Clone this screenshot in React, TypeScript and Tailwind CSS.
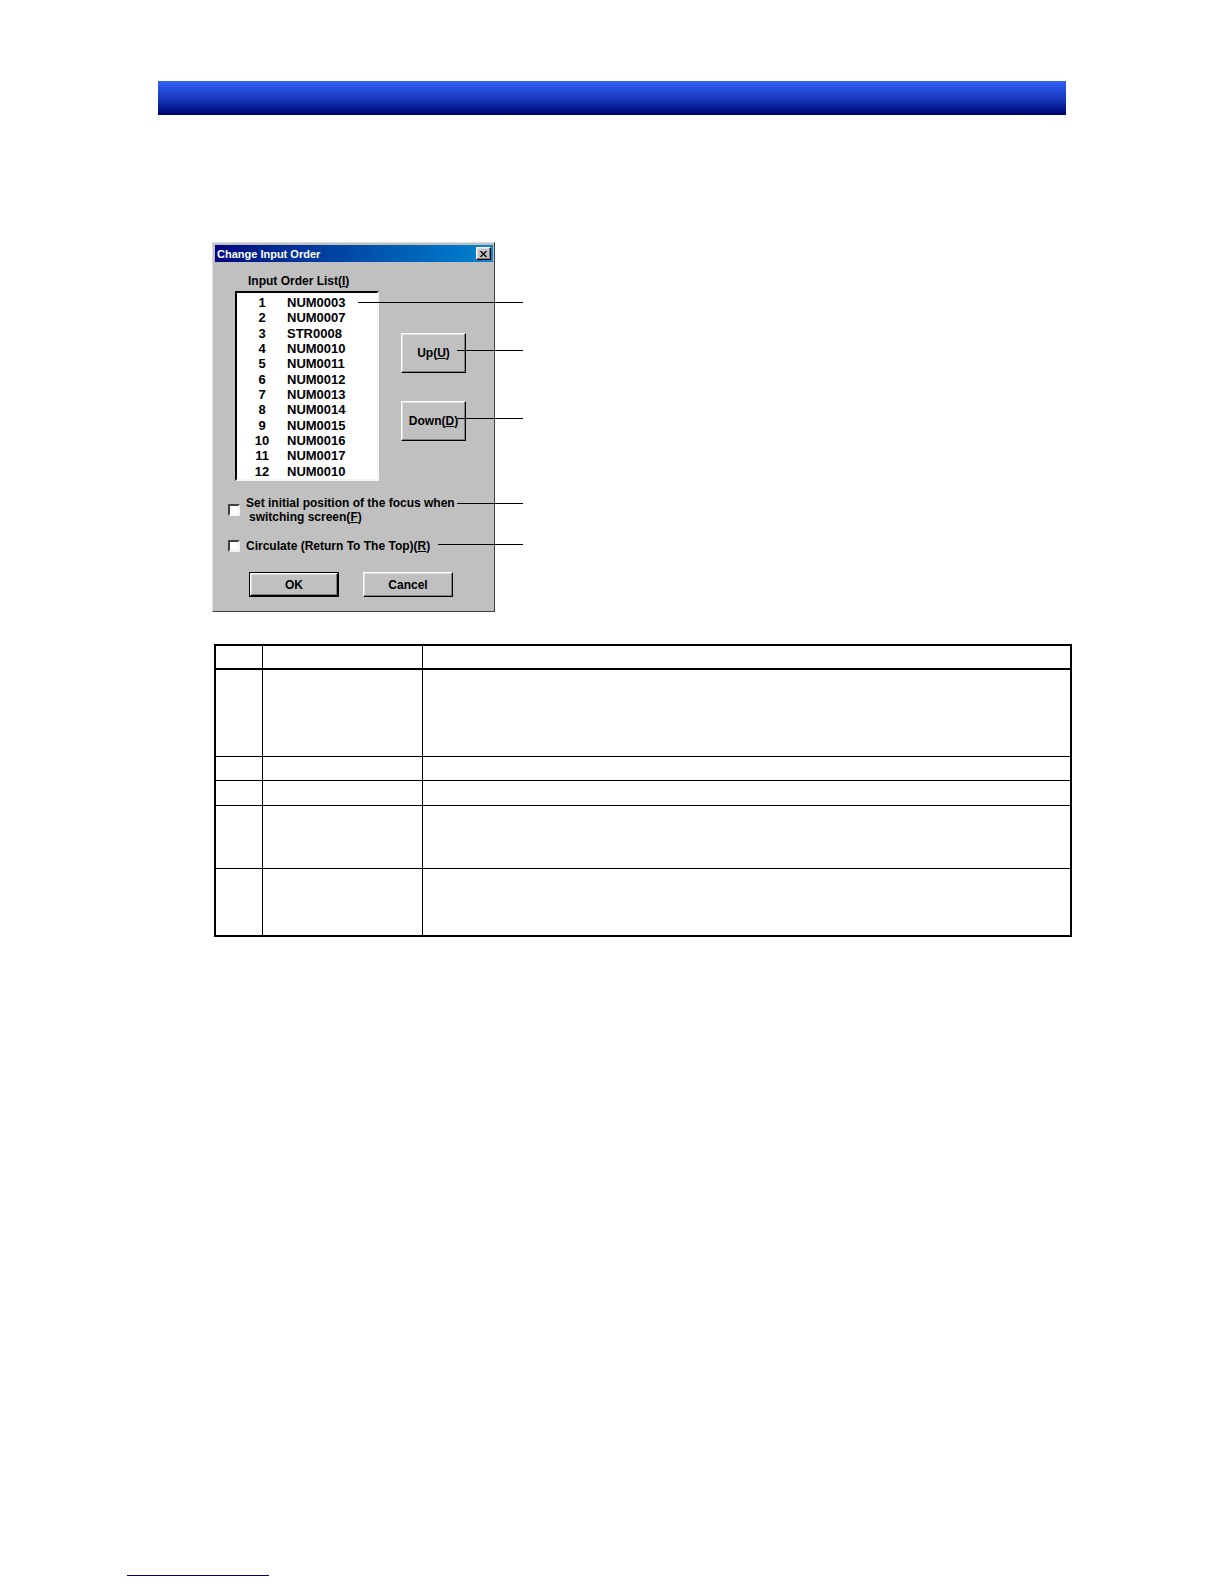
import React, { useState } from 'react';

const INITIAL_ITEMS = [
  'NUM0003', 'NUM0007', 'STR0008', 'NUM0010', 'NUM0011', 'NUM0012',
  'NUM0013', 'NUM0014', 'NUM0015', 'NUM0016', 'NUM0017', 'NUM0010',
];

const ROW_HEIGHTS = ['h-[87px]', 'h-[24px]', 'h-[25px]', 'h-[63px]', 'h-[66px]'];

export default function App() {
  return (
    <div className="min-h-screen flex flex-col bg-white pt-[81px] pb-2 font-['Liberation_Sans',Arial,sans-serif] text-black">
      <header className="mx-[158px] h-[34px] bg-linear-to-b from-[#2f62f4] via-[#1a3ac4] to-[#00006e]" />
      <main className="pl-[212px] pr-[152px] pt-[127px]">
        <div className="relative w-fit">
          <OrderDialog />
          <Callouts />
        </div>
        <ItemTable />
      </main>
      <footer className="mt-auto pl-[127px]">
        <hr className="w-[142px] border-t border-[#000080]" />
      </footer>
    </div>
  );
}

const OrderDialog: React.FC = () => {
  const [items, setItems] = useState(INITIAL_ITEMS);
  const [selected, setSelected] = useState(-1);
  const [initialFocus, setInitialFocus] = useState(false);
  const [circulate, setCirculate] = useState(false);

  const move = (step: number) => {
    const target = selected + step;
    if (selected < 0 || target < 0 || target >= items.length) return;
    const next = [...items];
    [next[selected], next[target]] = [next[target], next[selected]];
    setItems(next);
    setSelected(target);
  };

  return (
    <section
      role="dialog"
      aria-labelledby="dialog-title"
      className="w-[283px] bg-[#c0c0c0] border border-t-[#dfdfdf] border-l-[#dfdfdf] border-r-[#404040] border-b-[#404040] p-px pt-[2px] text-[12px] leading-[14px] font-bold"
    >
      <div className="flex items-center justify-between h-[17px] ml-px bg-linear-to-r from-[#000080] to-[#1084d0] pl-[2px] pr-[2px] text-white">
        <h1 id="dialog-title" className="text-[11px]">Change Input Order</h1>
        <button type="button" aria-label="Close" className={`${raisedCls} flex items-center justify-center w-[15px] h-[13px]`}>
          <svg width="7" height="6" viewBox="0 0 7 6" stroke="#000" strokeWidth="1.3" fill="none">
            <path d="M0.5 0 L6.5 6 M6.5 0 L0.5 6" />
          </svg>
        </button>
      </div>

      <div className="pl-[21px] pt-[12px]">
        <h2 id="list-label" className="pl-[13px]">Input Order List(<u>I</u>)</h2>
        <div className="flex pt-[3px]">
          <ol
            role="listbox"
            aria-labelledby="list-label"
            className="grid auto-rows-fr w-[144px] h-[190px] bg-white border-2 border-t-black border-l-black border-r-[#f4f4f4] border-b-[#f4f4f4] pt-[2px] text-[13px] leading-[15px]"
          >
            {items.map((name, i) => (
              <li
                key={i}
                role="option"
                aria-selected={i === selected}
                onClick={() => setSelected(i)}
                className={`flex items-center ${i === selected ? 'bg-[#000080] text-white' : ''}`}
              >
                <span className="w-[50px] text-center">{i + 1}</span>
                <span>{name}</span>
              </li>
            ))}
          </ol>
          <div className="flex flex-col gap-[28px] pl-[22px] pt-[42px]">
            <button type="button" onClick={() => move(-1)} className={`${raisedCls} w-[65px] h-[40px]`}>
              Up(<u>U</u>)
            </button>
            <button type="button" onClick={() => move(1)} className={`${raisedCls} w-[65px] h-[40px]`}>
              Down(<u>D</u>)
            </button>
          </div>
        </div>
      </div>

      <div className="pl-[14px] pt-[15px] space-y-[15px]">
        <div className="flex items-center gap-[6px]">
          <input id="initial-focus" type="checkbox" checked={initialFocus}
            onChange={e => setInitialFocus(e.target.checked)} className={checkCls} />
          <label htmlFor="initial-focus">
            Set initial position of the focus when
            <span className="block pl-[3px]">switching screen(<u>F</u>)</span>
          </label>
        </div>
        <div className="flex items-center gap-[6px]">
          <input id="circulate" type="checkbox" checked={circulate}
            onChange={e => setCirculate(e.target.checked)} className={checkCls} />
          <label htmlFor="circulate">Circulate (Return To The Top)(<u>R</u>)</label>
        </div>
      </div>

      <div className="flex gap-[24px] pl-[35px] pt-[19px] pb-[13px]">
        <button type="button" className="w-[90px] h-[25px] border border-black">
          <span className={`${raisedCls} flex items-center justify-center h-full`}>OK</span>
        </button>
        <button type="button" className={`${raisedCls} w-[90px] h-[25px]`}>Cancel</button>
      </div>
    </section>
  );
};

// Leader lines that run from the dialog's parts out to the right margin
const Callouts: React.FC = () => (
  <svg className="absolute top-0 left-0 pointer-events-none" width="312" height="370" viewBox="0 0 312 370"
    stroke="#000" strokeWidth="1" shapeRendering="crispEdges" aria-hidden="true">
    <path d="M146 60.5 H311 M245 108.5 H311 M245 176.5 H311 M245 261.5 H311 M226 302.5 H311" />
  </svg>
);

const ItemTable: React.FC = () => (
  <div className="pl-[2px] pt-[32px]">
    <table className="w-full table-fixed border-separate border-spacing-0 border-2 border-black">
      <colgroup>
        <col className="w-[47px]" />
        <col className="w-[160px]" />
        <col />
      </colgroup>
      <thead>
        <tr className="h-[24px]">
          <th className="p-0 border-b-2 border-r border-black" />
          <th className="p-0 border-b-2 border-r border-black" />
          <th className="p-0 border-b-2 border-black" />
        </tr>
      </thead>
      <tbody>
        {ROW_HEIGHTS.map((height, i) => {
          const line = i < ROW_HEIGHTS.length - 1 ? 'border-b' : '';
          return (
            <tr key={i} className={height}>
              <td className={`p-0 border-r border-black ${line}`} />
              <td className={`p-0 border-r border-black ${line}`} />
              <td className={`p-0 border-black ${line}`} />
            </tr>
          );
        })}
      </tbody>
    </table>
  </div>
);

const raisedCls = "bg-[#c0c0c0] border border-t-white border-l-white border-r-black border-b-black shadow-[inset_-1px_-1px_0_#808080,inset_1px_1px_0_#dfdfdf] text-black";

const checkCls = "appearance-none shrink-0 w-[12px] h-[12px] bg-white border-2 border-t-[#404040] border-l-[#404040] border-r-[#f4f4f4] border-b-[#f4f4f4] checked:bg-[#000080]";
